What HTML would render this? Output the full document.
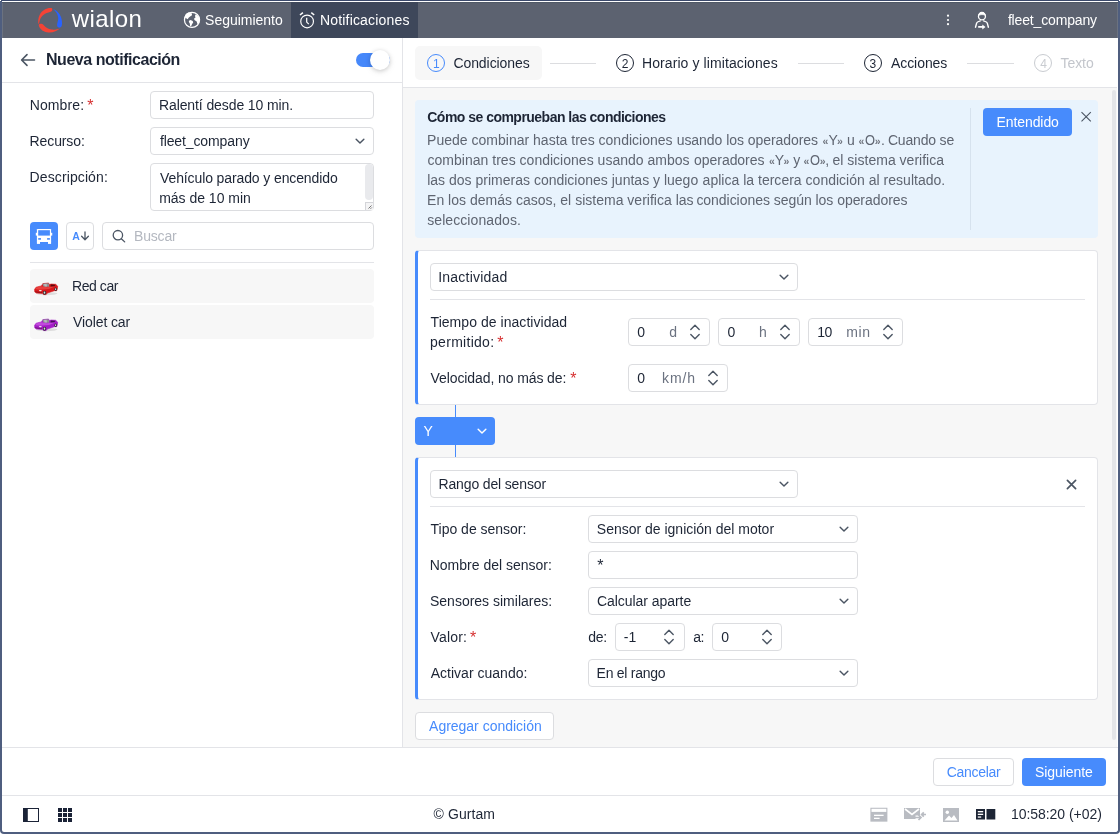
<!DOCTYPE html>
<html lang="es"><head><meta charset="utf-8"><title>Wialon - Nueva notificación</title>
<style>
html,body{margin:0;padding:0;}
body{width:1120px;height:834px;position:relative;overflow:hidden;background:#fff;font-family:"Liberation Sans",sans-serif;}
#app div,#app svg{position:absolute;box-sizing:border-box;}
#app{position:absolute;left:0;top:0;width:1120px;height:834px;overflow:hidden;will-change:transform;}
.t{position:absolute;white-space:pre;}
</style></head><body><div id="app">
<div style="left:0px;top:0px;width:1120px;height:834px;background:#fff;"></div>
<div style="left:2px;top:2px;width:1116px;height:36px;background:#5c6270;"></div>
<div style="left:2px;top:2px;width:1116px;height:1px;background:#4f5866;"></div>
<div style="left:2px;top:3px;width:1px;height:35px;background:#6b7280;"></div>
<div style="left:1117px;top:3px;width:1px;height:35px;background:#6b7280;"></div>
<div style="left:291px;top:2px;width:127px;height:36px;background:#3e475a;"></div>
<div style="left:402px;top:38px;width:1px;height:710px;background:#e3e4e8;"></div>
<div style="left:2px;top:82px;width:400px;height:1px;background:#e3e4e8;"></div>
<div style="left:403px;top:88px;width:714px;height:659px;background:#f7f7f7;"></div>
<div style="left:403px;top:87px;width:714px;height:1px;background:#e3e4e8;"></div>
<div style="left:2px;top:747px;width:1116px;height:1px;background:#e3e4e8;"></div>
<div style="left:2px;top:795px;width:1116px;height:1px;background:#e3e4e8;"></div>
<svg style="left:34px;top:4px" width="32" height="32" viewBox="0 0 32 32">
<path fill="#f44336" d="M18 4.300C14 3.400 8.500 5.600 5.600 11C4.200 13.800 3.800 17.500 4.600 20.600C5 19.600 5.300 18.600 5.600 17C6.400 13 9.500 9.600 14.500 8.400C16.500 7.900 18.400 7.400 18.300 5.600C18.300 5 18.200 4.600 18 4.300Z"/>
<path fill="#f44336" d="M4.800 21.400C5.600 24.600 8.600 27.400 13 28.200C18 29 23 27.400 26 24.200C23.400 25.400 20.600 26 17.600 25.600C14 25 11.600 23.400 9.800 21.200C8.600 19.800 6.600 19.400 5.400 20C4.800 20.400 4.700 20.900 4.800 21.400Z"/>
<path fill="#2962ff" d="M19 5C22 5.800 25.400 8.600 27 13C28 16 28.300 19.500 27.800 21.600C27.400 23.200 26.200 23.800 25 23.600C23.600 23.400 23 22 23.100 20.400C23.300 18 24.600 16 24.200 13.400C23.700 10.200 21.800 7.200 19 5Z"/>
</svg>
<svg style="left:180px;top:8px" width="24" height="24" viewBox="0 0 24 24"><circle cx="12" cy="11.900" r="7.550" fill="none" stroke="#fff" stroke-width="1.250"/>
<path fill="#fff" d="M4.900 8.600L5.800 6L8.300 4.600L12.100 5.500L11.800 7.500L10.100 8.600L8.600 9.800L7.800 11.200L5.200 9.800Z"/>
<path fill="#fff" d="M8.900 12.700L10.600 12.100L12.700 12.900L13.200 14.400L12.100 16.100L11.200 17.900L10.100 17.900L9.800 15.500L8.900 14.100Z"/>
<path fill="#fff" d="M15.500 6.600L17.300 7.200L19 9.500L19.700 12.100L19 15L17.300 16.100L16.700 13.500L14.400 12.100L14.100 10.600L15.500 9.500L15 8.100Z"/></svg>
<svg style="left:295px;top:8px" width="24" height="24" viewBox="0 0 24 24" fill="none" stroke="#fff" stroke-width="1.150">
<circle cx="12.100" cy="13.450" r="6.350"/><path d="M11.700 9.800V14.100L13.800 16.100" stroke-width="1.250"/><path d="M5 7L7.900 4.600M16.300 4.600L19.200 7" stroke-width="1.550"/></svg>
<svg style="left:945px;top:13px" width="6" height="14" viewBox="0 0 6 14"><circle cx="3" cy="2.700" r="1.1" fill="#fff"/><circle cx="3" cy="7" r="1.1" fill="#fff"/><circle cx="3" cy="11.2" r="1.1" fill="#fff"/></svg>
<svg style="left:970px;top:8px" width="24" height="24" viewBox="0 0 24 24" fill="none" stroke="#fff" stroke-width="1.300" stroke-linecap="round" stroke-linejoin="round">
<ellipse cx="11.950" cy="8.200" rx="3.500" ry="3.700"/><path d="M8.600 7.300C9 5 10.400 4.600 11.950 4.600C13.500 4.600 14.900 5 15.300 7.300C14 6.300 10 6.300 8.600 7.300Z" fill="#fff" stroke-width=".8"/>
<path d="M5.500 19.200L6.700 14.900C7 14 8 13.600 10.300 12.900M18.400 19.200L17.200 14.900C16.900 14 15.900 13.600 13.600 12.900" stroke-width="1.400"/>
<path d="M8.200 18.100H12.300V16.400L15.500 18.950L12.300 21.500V19.800H8.200Z" fill="#fff" stroke="none"/></svg>
<svg style="left:20px;top:53px" width="16" height="14" viewBox="0 0 16 14" fill="none" stroke="#4b5563" stroke-width="1.600" stroke-linecap="round" stroke-linejoin="round"><path d="M14.500 7H2M7 1.600L1.600 7L7 12.400"/></svg>
<div style="left:356px;top:53px;width:34px;height:14px;background:#4688fa;border-radius:7px;"></div>
<div style="left:370px;top:50px;width:20px;height:20px;background:#fff;border-radius:10px;box-shadow:0 1px 4px rgba(0,0,0,.18),0 2px 8px rgba(0,0,0,.06);"></div>
<div style="left:150px;top:91px;width:224px;height:28px;background:#fff;border:1px solid #dcdde0;border-radius:4px;"></div>
<div style="left:150px;top:127px;width:224px;height:28px;background:#fff;border:1px solid #dcdde0;border-radius:4px;"></div>
<svg style="left:353.7px;top:137px" width="12" height="8" viewBox="0 0 12 8" fill="none" stroke="#4b5563" stroke-width="1.450" stroke-linecap="round" stroke-linejoin="round"><path d="M2.150 2.150L6 5.900L9.850 2.150"/></svg>
<div style="left:150px;top:163px;width:224px;height:48px;background:#fff;border:1px solid #dcdde0;border-radius:4px;"></div>
<div style="left:365px;top:164px;width:8px;height:36px;background:#e9eaed;border-radius:4px;"></div>
<svg style="left:365px;top:202px" width="8" height="8" viewBox="0 0 8 8"><rect x=".5" y=".5" width="8" height="8" fill="#f4f4f5" stroke="#d4d5d9"/><path d="M3.500 6.500L6.500 3.500M5.500 6.800L6.800 5.500" stroke="#555" stroke-width=".8"/></svg>
<div style="left:30px;top:222px;width:28px;height:28px;background:#478bfc;border-radius:4px;"></div>
<svg style="left:35px;top:228px" width="18" height="17" viewBox="0 0 18 17"><rect x="1.900" y=".9" width="14.200" height="13" rx=".7" fill="#fff"/><rect x="1.900" y="13" width="3.100" height="2.900" fill="#fff"/><rect x="13" y="13" width="3.100" height="2.900" fill="#fff"/><rect x=".8" y="4.800" width="1.200" height="2.800" fill="#fff"/><rect x="16" y="4.800" width="1.250" height="2.800" fill="#fff"/><rect x="3.200" y="2.200" width="11.700" height="5.400" fill="#478bfc"/><rect x="3.200" y="10.100" width="2.800" height="1.600" fill="#478bfc"/><rect x="12.100" y="10.100" width="2.800" height="1.600" fill="#478bfc"/></svg>
<div style="left:66px;top:222px;width:28px;height:28px;background:#fff;border:1px solid #dcdde0;border-radius:4px;"></div>
<svg style="left:80px;top:231px" width="10" height="10" viewBox="0 0 10 10" fill="none" stroke="#4b5563" stroke-width="1.300" stroke-linecap="round" stroke-linejoin="round"><path d="M5 1V8.500M1.600 5.300L5 8.700L8.400 5.300"/></svg>
<div style="left:102px;top:222px;width:272px;height:28px;background:#fff;border:1px solid #dcdde0;border-radius:4px;"></div>
<svg style="left:111px;top:228px" width="16" height="16" viewBox="0 0 16 16" fill="none" stroke="#4b5563" stroke-width="1.300" stroke-linecap="round"><circle cx="6.900" cy="7.200" r="4.700"/><path d="M10.300 10.700L13.700 13.900"/></svg>
<div style="left:30px;top:262px;width:344px;height:1px;background:#e3e4e8;"></div>
<div style="left:30px;top:269px;width:344px;height:34px;background:#f7f7f7;border-radius:4px;"></div>
<div style="left:30px;top:305px;width:344px;height:34px;background:#f7f7f7;border-radius:4px;"></div>
<svg style="left:30px;top:274px" width="36" height="26" viewBox="0 0 36 26">
<ellipse cx="16.500" cy="19.600" rx="11" ry="1.600" fill="#000" opacity=".10"/>
<path d="M4.800 18L4.500 15.400L6.100 13.200L11.300 11.900L12.900 9.600L18.600 9L19.300 10.600L21.200 10L25.700 10.300L27.700 12.200L27.300 15.100L26.700 16.700L24.400 16.700L17.400 19L16.100 20.600L13.500 20.600L12.900 19.600L6.400 19Z" fill="#d8181c" stroke="#d8181c" stroke-width=".6" stroke-linejoin="round"/>
<path d="M6.100 13.600L11.300 12.300L17 13.200L22 12.400L25 12.600L19 15L10 15.800L5.500 15.300Z" fill="#ee4c48" opacity=".75"/>
<path d="M12.300 9.800L18.700 9.300L19.300 12.700L13.300 12.600Z" fill="#8f9294"/>
<path d="M14 10L16.500 9.800L17 12.400L14.600 12.400Z" fill="#b8bbbd"/>
<path d="M20.600 10.400L25.400 10.700L24.400 12.200L20.600 12.500Z" fill="#5a0c0e"/>
<ellipse cx="14.600" cy="18.700" rx="1.650" ry="2.050" fill="#2e2e30"/><ellipse cx="14.500" cy="18.700" rx=".85" ry="1.150" fill="#d9dadc"/>
<ellipse cx="25.700" cy="15.200" rx="1.250" ry="1.700" fill="#2e2e30"/><ellipse cx="25.600" cy="15.200" rx=".6" ry=".9" fill="#d9dadc"/>
<ellipse cx="10.300" cy="16.600" rx="1.500" ry=".55" fill="#f3e9e9" transform="rotate(4 10.300 16.600)"/>
<path d="M5.200 17.600L8.500 18.400L12 18.600" stroke="#3a1010" stroke-width=".7" fill="none" opacity=".6"/>
</svg>
<svg style="left:30px;top:310px" width="36" height="26" viewBox="0 0 36 26">
<ellipse cx="16.500" cy="19.600" rx="11" ry="1.600" fill="#000" opacity=".10"/>
<path d="M4.800 18L4.500 15.400L6.100 13.200L11.300 11.900L12.900 9.600L18.600 9L19.300 10.600L21.200 10L25.700 10.300L27.700 12.200L27.300 15.100L26.700 16.700L24.400 16.700L17.400 19L16.100 20.600L13.500 20.600L12.900 19.600L6.400 19Z" fill="#a41cc6" stroke="#a41cc6" stroke-width=".6" stroke-linejoin="round"/>
<path d="M6.100 13.600L11.300 12.300L17 13.200L22 12.400L25 12.600L19 15L10 15.800L5.500 15.300Z" fill="#cb58e4" opacity=".75"/>
<path d="M12.300 9.800L18.700 9.300L19.300 12.700L13.300 12.600Z" fill="#8f9294"/>
<path d="M14 10L16.500 9.800L17 12.400L14.600 12.400Z" fill="#b8bbbd"/>
<path d="M20.600 10.400L25.400 10.700L24.400 12.200L20.600 12.500Z" fill="#470a58"/>
<ellipse cx="14.600" cy="18.700" rx="1.650" ry="2.050" fill="#2e2e30"/><ellipse cx="14.500" cy="18.700" rx=".85" ry="1.150" fill="#d9dadc"/>
<ellipse cx="25.700" cy="15.200" rx="1.250" ry="1.700" fill="#2e2e30"/><ellipse cx="25.600" cy="15.200" rx=".6" ry=".9" fill="#d9dadc"/>
<ellipse cx="10.300" cy="16.600" rx="1.500" ry=".55" fill="#f3e9e9" transform="rotate(4 10.300 16.600)"/>
<path d="M5.200 17.600L8.500 18.400L12 18.600" stroke="#3a1010" stroke-width=".7" fill="none" opacity=".6"/>
</svg>
<div style="left:415px;top:46px;width:127px;height:34px;background:#f7f7f7;border-radius:5px;"></div>
<div style="left:427px;top:54px;width:18px;height:18px;border:1.400px solid #478bfc;border-radius:9px;"></div>
<div style="left:550px;top:63px;width:46px;height:1px;background:#dcdde0;"></div>
<div style="left:616px;top:54px;width:18px;height:18px;border:1.400px solid #1d2535;border-radius:9px;"></div>
<div style="left:798px;top:63px;width:46px;height:1px;background:#dcdde0;"></div>
<div style="left:864px;top:54px;width:18px;height:18px;border:1.400px solid #1d2535;border-radius:9px;"></div>
<div style="left:967px;top:63px;width:47px;height:1px;background:#dcdde0;"></div>
<div style="left:1034px;top:54px;width:18px;height:18px;border:1.400px solid #c9ccd1;border-radius:9px;"></div>
<div style="left:415px;top:100px;width:683px;height:138px;background:#e8f3fd;border-radius:4px;"></div>
<div style="left:970px;top:108px;width:1px;height:122px;background:#d6e2ee;"></div>
<div style="left:983px;top:108px;width:89px;height:28px;background:#478bfc;border-radius:4px;"></div>
<svg style="left:1080px;top:111px" width="12" height="12" viewBox="0 0 12 12" fill="none" stroke="#4b5563" stroke-width="1.100"><path d="M1.500 1.150L10.800 10.450M10.800 1.150L1.500 10.450"/></svg>
<div style="left:1112px;top:90px;width:4px;height:650px;background:#e4e5e8;border-radius:2px;"></div>
<div style="left:415px;top:250px;width:683px;height:155px;background:#fff;border:1px solid #e3e4e8;border-left:3px solid #478bfc;border-radius:4px;"></div>
<div style="left:430px;top:263px;width:368px;height:28px;background:#fff;border:1px solid #dcdde0;border-radius:4px;"></div>
<svg style="left:777.9px;top:273px" width="12" height="8" viewBox="0 0 12 8" fill="none" stroke="#4b5563" stroke-width="1.450" stroke-linecap="round" stroke-linejoin="round"><path d="M2.150 2.150L6 5.900L9.850 2.150"/></svg>
<div style="left:430px;top:299px;width:655px;height:1px;background:#e3e4e8;"></div>
<div style="left:628px;top:318px;width:82px;height:28px;background:#fff;border:1px solid #dcdde0;border-radius:4px;"></div>
<svg style="left:688.8px;top:323.2px" width="12" height="18" viewBox="0 0 12 18" fill="none" stroke="#4b5563" stroke-width="1.400" stroke-linecap="round" stroke-linejoin="round"><path d="M1.800 6.400L6 2.200L10.200 6.400M1.800 11.600L6 15.800L10.200 11.600"/></svg>
<div style="left:718px;top:318px;width:82px;height:28px;background:#fff;border:1px solid #dcdde0;border-radius:4px;"></div>
<svg style="left:778.9px;top:323.2px" width="12" height="18" viewBox="0 0 12 18" fill="none" stroke="#4b5563" stroke-width="1.400" stroke-linecap="round" stroke-linejoin="round"><path d="M1.800 6.400L6 2.200L10.200 6.400M1.800 11.600L6 15.800L10.200 11.600"/></svg>
<div style="left:808px;top:318px;width:95px;height:28px;background:#fff;border:1px solid #dcdde0;border-radius:4px;"></div>
<svg style="left:881.8px;top:323.2px" width="12" height="18" viewBox="0 0 12 18" fill="none" stroke="#4b5563" stroke-width="1.400" stroke-linecap="round" stroke-linejoin="round"><path d="M1.800 6.400L6 2.200L10.200 6.400M1.800 11.600L6 15.800L10.200 11.600"/></svg>
<div style="left:628px;top:364px;width:100px;height:28px;background:#fff;border:1px solid #dcdde0;border-radius:4px;"></div>
<svg style="left:706.9px;top:369.2px" width="12" height="18" viewBox="0 0 12 18" fill="none" stroke="#4b5563" stroke-width="1.400" stroke-linecap="round" stroke-linejoin="round"><path d="M1.800 6.400L6 2.200L10.200 6.400M1.800 11.600L6 15.800L10.200 11.600"/></svg>
<div style="left:455px;top:405px;width:1px;height:53px;background:#478bfc;"></div>
<div style="left:415px;top:417px;width:80px;height:28px;background:#478bfc;border-radius:4px;"></div>
<svg style="left:475.8px;top:427.2px" width="12" height="8" viewBox="0 0 12 8" fill="none" stroke="#fff" stroke-width="1.450" stroke-linecap="round" stroke-linejoin="round"><path d="M2.150 2.150L6 5.900L9.850 2.150"/></svg>
<div style="left:415px;top:457px;width:683px;height:243px;background:#fff;border:1px solid #e3e4e8;border-left:3px solid #478bfc;border-radius:4px;"></div>
<div style="left:430px;top:470px;width:368px;height:28px;background:#fff;border:1px solid #dcdde0;border-radius:4px;"></div>
<svg style="left:777.9px;top:480px" width="12" height="8" viewBox="0 0 12 8" fill="none" stroke="#4b5563" stroke-width="1.450" stroke-linecap="round" stroke-linejoin="round"><path d="M2.150 2.150L6 5.900L9.850 2.150"/></svg>
<svg style="left:1066px;top:479px" width="11" height="11" viewBox="0 0 11 11" fill="none" stroke="#4b5563" stroke-width="1.700" stroke-linecap="round"><path d="M1.400 1.400L9.600 9.600M9.600 1.400L1.400 9.600"/></svg>
<div style="left:430px;top:506px;width:655px;height:1px;background:#e3e4e8;"></div>
<div style="left:588px;top:515px;width:270px;height:28px;background:#fff;border:1px solid #dcdde0;border-radius:4px;"></div>
<svg style="left:837.9px;top:525px" width="12" height="8" viewBox="0 0 12 8" fill="none" stroke="#4b5563" stroke-width="1.450" stroke-linecap="round" stroke-linejoin="round"><path d="M2.150 2.150L6 5.900L9.850 2.150"/></svg>
<div style="left:588px;top:551px;width:270px;height:28px;background:#fff;border:1px solid #dcdde0;border-radius:4px;"></div>
<div style="left:588px;top:587px;width:270px;height:28px;background:#fff;border:1px solid #dcdde0;border-radius:4px;"></div>
<svg style="left:837.9px;top:597px" width="12" height="8" viewBox="0 0 12 8" fill="none" stroke="#4b5563" stroke-width="1.450" stroke-linecap="round" stroke-linejoin="round"><path d="M2.150 2.150L6 5.900L9.850 2.150"/></svg>
<div style="left:615px;top:623px;width:70px;height:28px;background:#fff;border:1px solid #dcdde0;border-radius:4px;"></div>
<svg style="left:663.4px;top:628.2px" width="12" height="18" viewBox="0 0 12 18" fill="none" stroke="#4b5563" stroke-width="1.400" stroke-linecap="round" stroke-linejoin="round"><path d="M1.800 6.400L6 2.200L10.200 6.400M1.800 11.600L6 15.800L10.200 11.600"/></svg>
<div style="left:712px;top:623px;width:70px;height:28px;background:#fff;border:1px solid #dcdde0;border-radius:4px;"></div>
<svg style="left:760.9px;top:628.2px" width="12" height="18" viewBox="0 0 12 18" fill="none" stroke="#4b5563" stroke-width="1.400" stroke-linecap="round" stroke-linejoin="round"><path d="M1.800 6.400L6 2.200L10.200 6.400M1.800 11.600L6 15.800L10.200 11.600"/></svg>
<div style="left:588px;top:659px;width:270px;height:28px;background:#fff;border:1px solid #dcdde0;border-radius:4px;"></div>
<svg style="left:837.9px;top:669px" width="12" height="8" viewBox="0 0 12 8" fill="none" stroke="#4b5563" stroke-width="1.450" stroke-linecap="round" stroke-linejoin="round"><path d="M2.150 2.150L6 5.900L9.850 2.150"/></svg>
<div style="left:415px;top:712px;width:139px;height:28px;background:#fff;border:1px solid #dcdde0;border-radius:4px;"></div>
<div style="left:933px;top:758px;width:81px;height:28px;background:#fff;border:1px solid #dcdde0;border-radius:4px;"></div>
<div style="left:1022px;top:758px;width:84px;height:28px;background:#478bfc;border-radius:4px;"></div>
<svg style="left:23px;top:808px" width="16" height="14" viewBox="0 0 16 14"><rect x=".5" y=".5" width="15" height="13" fill="#fff" stroke="#1b2337" stroke-width="1"/><rect x="0" y="0" width="4.800" height="14" fill="#1b2337"/></svg>
<svg style="left:58px;top:808px" width="14" height="14" viewBox="0 0 14 14" fill="#1b2337"><rect x="0" y="0" width="4" height="4"/><rect x="5" y="0" width="4" height="4"/><rect x="10" y="0" width="4" height="4"/><rect x="0" y="5" width="4" height="4"/><rect x="5" y="5" width="4" height="4"/><rect x="10" y="5" width="4" height="4"/><rect x="0" y="10" width="4" height="4"/><rect x="5" y="10" width="4" height="4"/><rect x="10" y="10" width="4" height="4"/></svg>
<svg style="left:870px;top:807px" width="18" height="15" viewBox="0 0 18 15"><rect x=".4" y=".75" width="17" height="13.900" fill="#b9bcc2"/><rect x="1.500" y="1.800" width="14.800" height="3.100" fill="#fff"/><rect x="4" y="7.700" width="9.600" height="1.300" fill="#fff"/><rect x="4" y="10.700" width="5.600" height="1.300" fill="#fff"/></svg>
<svg style="left:904px;top:808px" width="23" height="14" viewBox="0 0 23 14"><path d="M0 0H16V7.500H11.500V11H0Z" fill="#b9bcc2"/><path d="M1 1L8 6.500L15 1" fill="none" stroke="#fff" stroke-width="1.600"/><path d="M11 9.500H16.500M14.500 7L17 9.500L14.500 12" fill="none" stroke="#b9bcc2" stroke-width="1.700"/><path d="M22 6.500H18M19.800 4.300L17.600 6.500L19.800 8.700" fill="none" stroke="#b9bcc2" stroke-width="1.700"/></svg>
<svg style="left:943px;top:808px" width="16" height="14" viewBox="0 0 16 14"><rect width="16" height="14" fill="#b9bcc2"/><circle cx="4.300" cy="4.300" r="1.700" fill="#fff"/><path d="M1.500 12.500L6 7.500L8.500 10L11 7L14.500 12.500Z" fill="#fff"/></svg>
<svg style="left:976px;top:809px" width="20" height="11" viewBox="0 0 20 11"><rect width="9" height="10.500" fill="#1d2535"/><rect x="10.500" width="8.800" height="10.500" fill="#1d2535"/><rect x="1.800" y="2" width="5.400" height="1.300" fill="#fff"/><rect x="1.800" y="4.700" width="5.400" height="1.300" fill="#fff"/><rect x="1.800" y="7.400" width="3.400" height="1.300" fill="#fff"/></svg>
<span class="t" id="t0" style="left:71.71px;top:4.43px;font-size:24px;line-height:30px;color:#fff;letter-spacing:0.424px;">wialon</span>
<span class="t" id="t1" style="left:205.08px;top:10.15px;font-size:14px;line-height:20px;color:#fff;letter-spacing:-0.013px;">Seguimiento</span>
<span class="t" id="t2" style="left:319.95px;top:10.15px;font-size:14px;line-height:20px;color:#fff;letter-spacing:0.181px;">Notificaciones</span>
<span class="t" id="t3" style="left:1007.88px;top:9.65px;font-size:14px;line-height:20px;color:#fff;letter-spacing:-0.155px;">fleet_company</span>
<span class="t" id="t4" style="left:46.00px;top:49.66px;font-size:16px;line-height:20px;color:#1d2535;font-weight:700;letter-spacing:-0.463px;">Nueva notificación</span>
<span class="t" id="t5" style="left:29.68px;top:95.15px;font-size:14px;line-height:20px;color:#1d2535;letter-spacing:0.129px;">Nombre:</span>
<span class="t" id="t6" style="left:87.34px;top:96.26px;font-size:16px;line-height:20px;color:#d63031;">*</span>
<span class="t" id="t7" style="left:158.95px;top:95.15px;font-size:14px;line-height:20px;color:#1d2535;letter-spacing:-0.097px;">Ralentí desde 10 min.</span>
<span class="t" id="t8" style="left:29.62px;top:131.15px;font-size:14px;line-height:20px;color:#1d2535;letter-spacing:-0.118px;">Recurso:</span>
<span class="t" id="t9" style="left:159.88px;top:131.15px;font-size:14px;line-height:20px;color:#1d2535;letter-spacing:-0.108px;">fleet_company</span>
<span class="t" id="t10" style="left:29.62px;top:167.15px;font-size:14px;line-height:20px;color:#1d2535;letter-spacing:0.105px;">Descripción:</span>
<span class="t" id="t11" style="left:160.02px;top:168.15px;font-size:14px;line-height:20px;color:#1d2535;letter-spacing:-0.113px;">Vehículo parado y encendido</span>
<span class="t" id="t12" style="left:159.15px;top:188.15px;font-size:14px;line-height:20px;color:#1d2535;letter-spacing:-0.012px;">más de 10 min</span>
<span class="t" id="t13" style="left:72.36px;top:225.86px;font-size:10.5px;line-height:20px;color:#478bfc;font-weight:700;">A</span>
<span class="t" id="t14" style="left:133.95px;top:225.85px;font-size:14px;line-height:20px;color:#b4b8c0;letter-spacing:-0.146px;">Buscar</span>
<span class="t" id="t15" style="left:71.95px;top:276.15px;font-size:14px;line-height:20px;color:#1d2535;letter-spacing:-0.414px;">Red car</span>
<span class="t" id="t16" style="left:73.02px;top:312.15px;font-size:14px;line-height:20px;color:#1d2535;letter-spacing:-0.101px;">Violet car</span>
<span class="t" id="t17" style="left:433.03px;top:53.84px;font-size:12px;line-height:20px;color:#478bfc;">1</span>
<span class="t" id="t18" style="left:453.39px;top:53.15px;font-size:14px;line-height:20px;color:#1d2535;letter-spacing:-0.064px;">Condiciones</span>
<span class="t" id="t19" style="left:621.78px;top:53.84px;font-size:12px;line-height:20px;color:#1d2535;">2</span>
<span class="t" id="t20" style="left:641.95px;top:53.15px;font-size:14px;line-height:20px;color:#1d2535;letter-spacing:0.094px;">Horario y limitaciones</span>
<span class="t" id="t21" style="left:869.59px;top:53.84px;font-size:12px;line-height:20px;color:#1d2535;">3</span>
<span class="t" id="t22" style="left:890.98px;top:53.15px;font-size:14px;line-height:20px;color:#1d2535;letter-spacing:-0.065px;">Acciones</span>
<span class="t" id="t23" style="left:1040.15px;top:53.84px;font-size:12px;line-height:20px;color:#c9ccd1;">4</span>
<span class="t" id="t24" style="left:1060.57px;top:53.15px;font-size:14px;line-height:20px;color:#c3c6cc;letter-spacing:-0.090px;">Texto</span>
<span class="t" id="t25" style="left:427.27px;top:107.15px;font-size:14px;line-height:20px;color:#1d2535;font-weight:700;letter-spacing:-0.519px;">Cómo se comprueban las condiciones</span>
<span class="t" id="t26" style="left:427.07px;top:130.15px;font-size:14px;line-height:20px;color:#5f6571;letter-spacing:0.011px;">Puede combinar hasta tres condiciones</span>
<span class="t" id="t27" style="left:676.70px;top:130.15px;font-size:14px;line-height:20px;color:#5f6571;letter-spacing:-0.051px;">usando los operadores</span>
<span class="t" id="t28" style="left:828.42px;top:130.15px;font-size:14px;line-height:20px;color:#5f6571;">Y</span>
<span class="t" id="t29" style="left:846.99px;top:130.15px;font-size:14px;line-height:20px;color:#5f6571;">u</span>
<span class="t" id="t30" style="left:865.24px;top:130.15px;font-size:14px;line-height:20px;color:#5f6571;transform:scaleX(.92);transform-origin:0 0;">O</span>
<span class="t" id="t31" style="left:881.00px;top:130.15px;font-size:14px;line-height:20px;color:#5f6571;">.</span>
<span class="t" id="t32" style="left:887.93px;top:130.15px;font-size:14px;line-height:20px;color:#5f6571;letter-spacing:-0.183px;">Cuando se</span>
<span class="t" id="t33" style="left:427.52px;top:150.15px;font-size:14px;line-height:20px;color:#5f6571;letter-spacing:0.016px;">combinan tres condiciones usando ambos</span>
<span class="t" id="t34" style="left:694.12px;top:150.15px;font-size:14px;line-height:20px;color:#5f6571;letter-spacing:-0.055px;">operadores</span>
<span class="t" id="t35" style="left:774.69px;top:150.15px;font-size:14px;line-height:20px;color:#5f6571;">Y</span>
<span class="t" id="t36" style="left:793.33px;top:150.15px;font-size:14px;line-height:20px;color:#5f6571;">y</span>
<span class="t" id="t37" style="left:810.24px;top:150.15px;font-size:14px;line-height:20px;color:#5f6571;transform:scaleX(.92);transform-origin:0 0;">O</span>
<span class="t" id="t38" style="left:825.27px;top:150.15px;font-size:14px;line-height:20px;color:#5f6571;">,</span>
<span class="t" id="t39" style="left:832.52px;top:150.15px;font-size:14px;line-height:20px;color:#5f6571;letter-spacing:0.014px;">el sistema verifica</span>
<span class="t" id="t40" style="left:427.22px;top:170.15px;font-size:14px;line-height:20px;color:#5f6571;letter-spacing:0.004px;">las dos primeras condiciones juntas y luego</span>
<span class="t" id="t41" style="left:702.59px;top:170.15px;font-size:14px;line-height:20px;color:#5f6571;letter-spacing:0.015px;">aplica la tercera condición al resultado.</span>
<span class="t" id="t42" style="left:427.07px;top:190.15px;font-size:14px;line-height:20px;color:#5f6571;letter-spacing:0.010px;">En los demás casos, el sistema verifica las</span>
<span class="t" id="t43" style="left:696.40px;top:190.15px;font-size:14px;line-height:20px;color:#5f6571;letter-spacing:-0.041px;">condiciones según los operadores</span>
<span class="t" id="t44" style="left:822.51px;top:130.66px;font-size:10.5px;line-height:20px;color:#70757f;font-weight:700;">«</span>
<span class="t" id="t45" style="left:837.12px;top:130.66px;font-size:10.5px;line-height:20px;color:#70757f;font-weight:700;">»</span>
<span class="t" id="t46" style="left:858.60px;top:130.66px;font-size:10.5px;line-height:20px;color:#70757f;font-weight:700;">«</span>
<span class="t" id="t47" style="left:874.80px;top:130.66px;font-size:10.5px;line-height:20px;color:#70757f;font-weight:700;">»</span>
<span class="t" id="t48" style="left:768.93px;top:150.66px;font-size:10.5px;line-height:20px;color:#70757f;font-weight:700;">«</span>
<span class="t" id="t49" style="left:783.58px;top:150.66px;font-size:10.5px;line-height:20px;color:#70757f;font-weight:700;">»</span>
<span class="t" id="t50" style="left:803.60px;top:150.66px;font-size:10.5px;line-height:20px;color:#70757f;font-weight:700;">«</span>
<span class="t" id="t51" style="left:819.80px;top:150.66px;font-size:10.5px;line-height:20px;color:#70757f;font-weight:700;">»</span>
<span class="t" id="t52" style="left:427.19px;top:210.15px;font-size:14px;line-height:20px;color:#5f6571;letter-spacing:0.084px;">seleccionados.</span>
<span class="t" id="t53" style="left:996.42px;top:112.15px;font-size:14px;line-height:20px;color:#fff;letter-spacing:-0.073px;">Entendido</span>
<span class="t" id="t54" style="left:438.24px;top:266.65px;font-size:14px;line-height:20px;color:#1d2535;letter-spacing:0.209px;">Inactividad</span>
<span class="t" id="t55" style="left:430.56px;top:312.15px;font-size:14px;line-height:20px;color:#1d2535;letter-spacing:0.047px;">Tiempo de inactividad</span>
<span class="t" id="t56" style="left:430.06px;top:332.15px;font-size:14px;line-height:20px;color:#1d2535;letter-spacing:0.284px;">permitido:</span>
<span class="t" id="t57" style="left:497.34px;top:333.26px;font-size:16px;line-height:20px;color:#d63031;">*</span>
<span class="t" id="t58" style="left:430.54px;top:368.15px;font-size:14px;line-height:20px;color:#1d2535;letter-spacing:-0.095px;">Velocidad, no más de:</span>
<span class="t" id="t59" style="left:570.34px;top:369.26px;font-size:16px;line-height:20px;color:#d63031;">*</span>
<span class="t" id="t60" style="left:637.30px;top:321.65px;font-size:14px;line-height:20px;color:#1d2535;">0</span>
<span class="t" id="t61" style="left:669.14px;top:321.65px;font-size:14px;line-height:20px;color:#6b7280;">d</span>
<span class="t" id="t62" style="left:727.47px;top:321.65px;font-size:14px;line-height:20px;color:#1d2535;">0</span>
<span class="t" id="t63" style="left:758.91px;top:321.65px;font-size:14px;line-height:20px;color:#6b7280;">h</span>
<span class="t" id="t64" style="left:817.37px;top:321.65px;font-size:14px;line-height:20px;color:#1d2535;letter-spacing:-0.694px;">10</span>
<span class="t" id="t65" style="left:846.25px;top:321.65px;font-size:14px;line-height:20px;color:#6b7280;letter-spacing:0.603px;">min</span>
<span class="t" id="t66" style="left:637.30px;top:367.65px;font-size:14px;line-height:20px;color:#1d2535;">0</span>
<span class="t" id="t67" style="left:662.06px;top:367.65px;font-size:14px;line-height:20px;color:#6b7280;letter-spacing:0.884px;">km/h</span>
<span class="t" id="t68" style="left:423.40px;top:420.85px;font-size:14px;line-height:20px;color:#fff;">Y</span>
<span class="t" id="t69" style="left:438.52px;top:473.65px;font-size:14px;line-height:20px;color:#1d2535;letter-spacing:-0.147px;">Rango del sensor</span>
<span class="t" id="t70" style="left:430.56px;top:518.85px;font-size:14px;line-height:20px;color:#1d2535;letter-spacing:-0.009px;">Tipo de sensor:</span>
<span class="t" id="t71" style="left:596.87px;top:518.85px;font-size:14px;line-height:20px;color:#1d2535;letter-spacing:-0.009px;">Sensor de ignición del motor</span>
<span class="t" id="t72" style="left:429.68px;top:554.85px;font-size:14px;line-height:20px;color:#1d2535;letter-spacing:0.003px;">Nombre del sensor:</span>
<span class="t" id="t73" style="left:597.14px;top:556.26px;font-size:16px;line-height:20px;color:#1d2535;">*</span>
<span class="t" id="t74" style="left:430.00px;top:590.85px;font-size:14px;line-height:20px;color:#1d2535;letter-spacing:-0.003px;">Sensores similares:</span>
<span class="t" id="t75" style="left:596.97px;top:590.85px;font-size:14px;line-height:20px;color:#1d2535;letter-spacing:-0.051px;">Calcular aparte</span>
<span class="t" id="t76" style="left:430.54px;top:626.85px;font-size:14px;line-height:20px;color:#1d2535;letter-spacing:0.158px;">Valor:</span>
<span class="t" id="t77" style="left:469.98px;top:627.96px;font-size:16px;line-height:20px;color:#d63031;">*</span>
<span class="t" id="t78" style="left:588.34px;top:626.85px;font-size:14px;line-height:20px;color:#1d2535;letter-spacing:-0.358px;">de:</span>
<span class="t" id="t79" style="left:623.73px;top:626.85px;font-size:14px;line-height:20px;color:#1d2535;">-1</span>
<span class="t" id="t80" style="left:693.21px;top:626.85px;font-size:14px;line-height:20px;color:#1d2535;letter-spacing:-0.484px;">a:</span>
<span class="t" id="t81" style="left:721.16px;top:626.85px;font-size:14px;line-height:20px;color:#1d2535;">0</span>
<span class="t" id="t82" style="left:430.66px;top:662.85px;font-size:14px;line-height:20px;color:#1d2535;letter-spacing:0.018px;">Activar cuando:</span>
<span class="t" id="t83" style="left:596.62px;top:662.85px;font-size:14px;line-height:20px;color:#1d2535;letter-spacing:-0.270px;">En el rango</span>
<span class="t" id="t84" style="left:429.07px;top:716.15px;font-size:14px;line-height:20px;color:#478bfc;letter-spacing:-0.014px;">Agregar condición</span>
<span class="t" id="t85" style="left:946.70px;top:762.15px;font-size:14px;line-height:20px;color:#478bfc;letter-spacing:-0.299px;">Cancelar</span>
<span class="t" id="t86" style="left:1035.08px;top:762.15px;font-size:14px;line-height:20px;color:#fff;letter-spacing:-0.080px;">Siguiente</span>
<span class="t" id="t87" style="left:433.62px;top:803.85px;font-size:14px;line-height:20px;color:#1d2535;letter-spacing:0.067px;">© Gurtam</span>
<span class="t" id="t88" style="left:1010.98px;top:803.85px;font-size:14px;line-height:20px;color:#1d2535;letter-spacing:-0.048px;">10:58:20 (+02)</span>
<div style="left:0;top:0;width:1120px;height:834px;border:2px solid #4f5e7f;border-top:1px solid #3c4a6c;border-radius:0 0 4px 4px;pointer-events:none;"></div>
<div style="left:0;top:0;width:1px;height:1px;background:#fff;"></div><div style="left:1119px;top:0;width:1px;height:1px;background:#fff;"></div>
</div></body></html>
